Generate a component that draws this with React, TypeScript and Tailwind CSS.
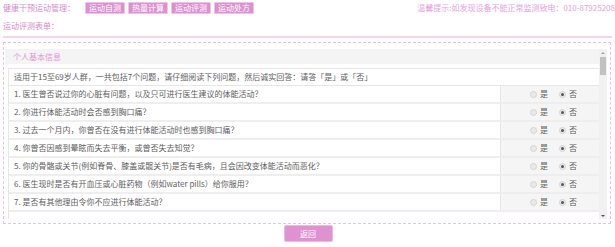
import React from "react";

const questions = [
  "1. 医生曾否说过你的心脏有问题，以及只可进行医生建议的体能活动？",
  "2. 你进行体能活动时会否感到胸口痛？",
  "3. 过去一个月内，你曾否在没有进行体能活动时也感到胸口痛？",
  "4. 你曾否因感到晕眩而失去平衡，或曾否失去知觉？",
  "5. 你的骨骼或关节(例如脊骨、膝盖或髋关节)是否有毛病，且会因改变体能活动而恶化？",
  "6. 医生现时是否有开血压或心脏药物（例如water pills）给你服用？",
  "7. 是否有其他理由令你不应进行体能活动？",
];

function Radio({ checked }: { checked?: boolean }) {
  return (
    <span className="inline-flex items-center justify-center w-[7px] h-[7px] rounded-full border border-[#d4d4d4] bg-[#e9e9e9]">
      {checked && <span className="w-[3px] h-[3px] rounded-full bg-[#555]" />}
    </span>
  );
}

export default function App() {
  const tabs = ["运动自测", "热量计算", "运动评测", "运动处方"];
  return (
    <div className="w-[615px] h-[247px] bg-white overflow-hidden text-[8px] leading-[12px] font-['Noto_Sans_CJK_SC',sans-serif]">
      {/* top bar */}
      <div className="flex items-center h-[15px] pl-[3px]">
        <span className="text-[#d78bca] whitespace-nowrap">健康干预运动管理：</span>
        <div className="flex gap-[3px] ml-[10px]">
          {tabs.map((t) => (
            <span
              key={t}
              className="h-[12px] w-[40px] justify-center flex items-center bg-[#dc90d0] text-white border border-[#eec4e8] rounded-[1px] whitespace-nowrap"
            >
              {t}
            </span>
          ))}
        </div>
        <span className="ml-auto whitespace-nowrap text-[#e6a1dc]">
          温馨提示:如发现设备不能正常监测致电：010-87925208
        </span>
      </div>
      <div className="pl-[3px] mt-[5px] h-[14px] text-[#d78bca]">运动评测表单：</div>
      <div className="mx-[3px] mt-[2px] h-[2px] bg-[#f3d3ee]" />
      {/* dashed panel */}
      <div className="ml-[3px] mr-[4px] mt-[4px] h-[182px] border border-dashed border-[#ecbfe5] pt-[6px] pl-[1px] pr-[3px] pb-[4px]">
        <div className="flex h-full">
          <div className="flex-1 overflow-hidden">
            <div className="h-[15px] bg-[#f4f4f4] flex items-center pl-[8px] text-[#df95d4]">个人基本信息</div>
            <div className="mt-[4px] ml-[3px] border-l border-[#e6e6e6]">
              <div className="h-[18px] flex items-center pl-[5px] border-t border-b border-[#e6e6e6] text-[#5e5e5e] bg-white">
                适用于15至69岁人群，一共包括7个问题，请仔细阅读下列问题，然后诚实回答：请答「是」或「否」
              </div>
              {questions.map((q) => (
                <div key={q} className="h-[18px] flex border-b-2 border-[#eeeeee]">
                  <div className="flex-1 flex items-center pl-[5px] text-[#5e5e5e] bg-white whitespace-nowrap overflow-hidden">{q}</div>
                  <div className="w-[99px] bg-[#f5f5f5] border-l border-[#e4e4e4] flex items-center pl-[29px] gap-[3px] text-[#5e5e5e]">
                    <Radio />
                    <span>是</span>
                    <span className="w-[5px]" />
                    <Radio checked />
                    <span>否</span>
                  </div>
                </div>
              ))}
              <div className="h-[10px] bg-white" />
            </div>
          </div>
          {/* scrollbar */}
          <div className="w-[8px] bg-[#f1f1f1] flex flex-col items-center">
            <div className="h-[7px] flex items-center justify-center">
              <span className="w-0 h-0 border-l-[2px] border-r-[2px] border-b-[2px] border-l-transparent border-r-transparent border-b-[#a3a3a3]" />
            </div>
            <div className="w-[6px] h-[18px] bg-[#c1c1c1] mt-[1px]" />
            <div className="flex-1" />
            <div className="h-[7px] flex items-center justify-center">
              <span className="w-0 h-0 border-l-[2px] border-r-[2px] border-t-[2px] border-l-transparent border-r-transparent border-t-[#505050]" />
            </div>
          </div>
        </div>
      </div>
      <div className="flex justify-center mt-[1px] pl-[1px]">
        <button className="w-[49px] h-[17px] bg-[#df92d2] text-white rounded-[2px] border border-[#eab9e3] leading-[15px]">返回</button>
      </div>
    </div>
  );
}
